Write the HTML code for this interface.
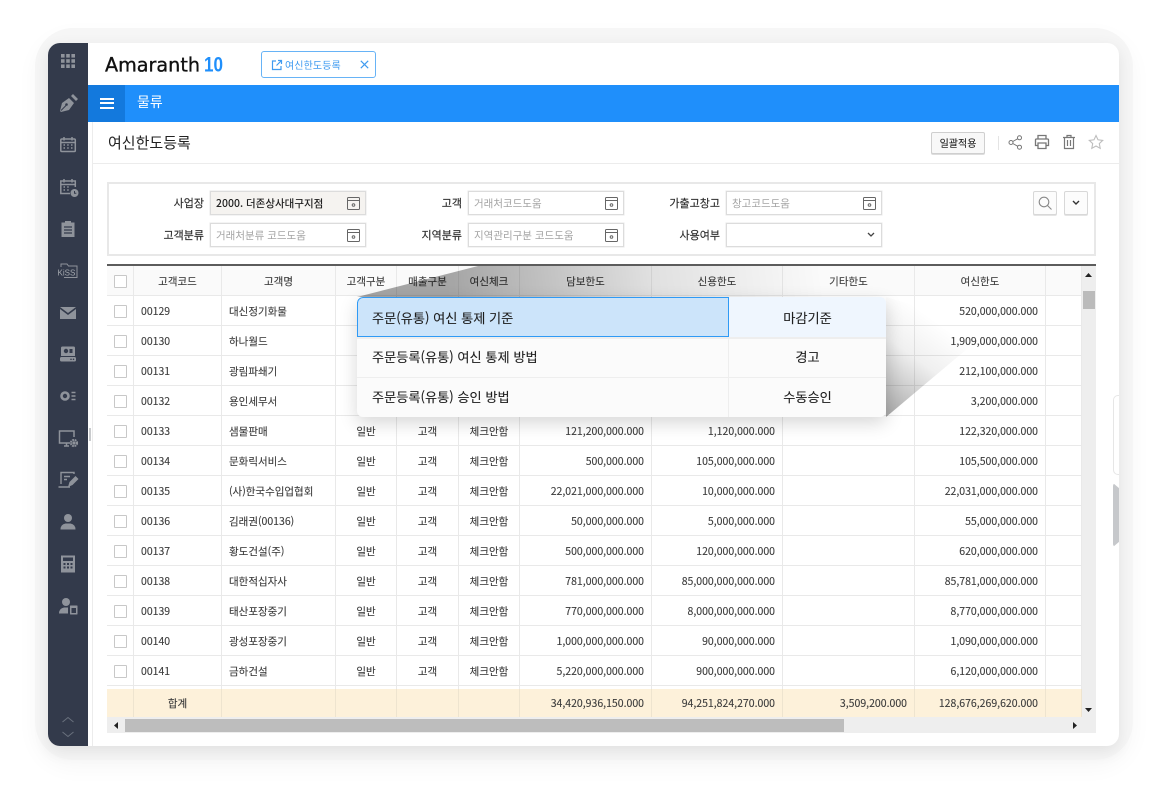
<!DOCTYPE html>
<html lang="ko"><head><meta charset="utf-8"><title>여신한도등록</title>
<style>
*{box-sizing:border-box}
html,body{margin:0;padding:0;background:#fff}
body{position:relative;width:1168px;height:801px;overflow:hidden;font-family:"Noto Sans CJK KR","Liberation Sans",sans-serif;font-size:10.5px;color:#444}
body>*{filter:blur(.3px)}
.a{position:absolute}
.frame{left:35px;top:28px;width:1098px;height:732px;border-radius:38px;background:#f6f6f6;box-shadow:0 8px 22px rgba(0,0,0,.035)}
.win{left:48px;top:43px;width:1071px;height:703px;border-radius:12px;background:#fff;box-shadow:0 5px 16px rgba(0,0,0,.09);overflow:hidden}
.side{left:48px;top:43px;width:40px;height:703px;background:#333a4b;border-radius:12px 0 0 12px}
.ic{position:absolute;left:56px;width:24px;height:24px}
.lbl{position:absolute;width:90px;text-align:right;font-size:11px;line-height:24px;color:#2e2e2e;-webkit-text-stroke:.15px #2e2e2e}
.inp{position:absolute;width:156px;height:24px;border:1px solid #dcdcdc;background:#fff;font-size:10.5px;line-height:22px;padding:1px 0 0 5px;color:#a4a4a4;box-shadow:0 0 0 .5px #e8e8e8}
.cal{position:absolute;right:5px;top:5px;width:13px;height:13px}
table{border-collapse:separate;border-spacing:0;table-layout:fixed;width:975px}
td,th{box-sizing:border-box;height:30px;padding:1px 0 0;border-right:1px solid #e9e9e9;border-bottom:1.5px solid #e9e9e9;text-align:center;font-size:10.5px;font-weight:400;color:#3c3c3c;white-space:nowrap;overflow:hidden;-webkit-text-stroke:.12px #3c3c3c}
th{background:#fafafa}
td.l{text-align:left;padding-left:7px}
td.r{text-align:right;padding-right:7px}
.t td{height:28px;border-bottom:0;border-color:#eee4cf;padding-top:0}
.cb{display:inline-block;width:13px;height:13px;border:1.5px solid #c8c8c8;background:#fff;vertical-align:middle;margin-top:-1px;border-radius:1px}
.pop{left:357px;top:297px;width:529px;height:120px;background:#fbfbfb;border-radius:6px;box-shadow:0 6px 18px rgba(0,0,0,.16);overflow:hidden}
.pc{position:absolute;font-size:13.2px;line-height:40px;height:40px;color:#1e1e1e;-webkit-text-stroke:.1px #1e1e1e}
</style></head><body>
<div class="a frame"></div>
<div class="a win"></div>
<div class="a side"></div>

<!-- sidebar icons -->
<svg class="ic" style="top:49px" viewBox="0 0 24 24" fill="#8f939b"><rect x="5" y="5" width="3.6" height="3.6"/><rect x="10.2" y="5" width="3.6" height="3.6"/><rect x="15.4" y="5" width="3.6" height="3.6"/><rect x="5" y="10.2" width="3.6" height="3.6"/><rect x="10.2" y="10.2" width="3.6" height="3.6"/><rect x="15.4" y="10.2" width="3.6" height="3.6"/><rect x="5" y="15.4" width="3.6" height="3.6"/><rect x="10.2" y="15.4" width="3.6" height="3.6"/><rect x="15.4" y="15.4" width="3.6" height="3.6"/></svg>
<svg class="ic" style="top:91px" viewBox="0 0 24 24" fill="#8f939b"><path d="M4 20l2-8 7-5 5 5-5 7-8 2zM15 5l2-2 5 5-2 2z"/><path d="M5 19.500l5-5" stroke="#333a4b" stroke-width="1"/><circle cx="10.500" cy="13.500" r="1.300" fill="#333a4b"/></svg>
<svg class="ic" style="top:133px" viewBox="0 0 24 24" fill="none" stroke="#8f939b" stroke-width="1.500"><rect x="4.800" y="6" width="14.500" height="12.500" rx="1"/><path d="M4.800 9.500h14.500M8 4v3.500M16 4v3.500"/><path d="M7.500 12h1.500M11.200 12h1.500M15 12h1.500M7.500 15h1.500M11.200 15h1.500M15 15h1.500"/></svg>
<svg class="ic" style="top:175px" viewBox="0 0 24 24" fill="none" stroke="#8f939b" stroke-width="1.500"><path d="M14 18.500H4.800V6h14.500v6M4.800 9.500h14.500M8 4v3.500M16 4v3.500"/><path d="M7.500 12h1.500M11.200 12h1.500M7.500 15h1.500M11.200 15h1.500"/><circle cx="18.500" cy="18" r="4" fill="#8f939b" stroke="none"/><path d="M18.500 16v2.200h1.800" stroke="#333a4b" stroke-width="1"/></svg>
<svg class="ic" style="top:217px" viewBox="0 0 24 24" fill="#8f939b"><path d="M5.500 5.500h13v14.500h-13z"/><rect x="9" y="4" width="6" height="3"/><path d="M8 10h8M8 13h8M8 16h8" stroke="#333a4b" stroke-width="1.200"/></svg>
<svg class="ic" style="top:259px" viewBox="0 0 24 24" fill="none" stroke="#8f939b" stroke-width="1"><path d="M5 8V5h6l1.500 2h8.500v11.500H8"/><text x="1.500" y="16.500" font-family="Liberation Sans,sans-serif" font-size="8" fill="#a4a8ae" stroke="none">KiSS</text></svg>
<svg class="ic" style="top:301px" viewBox="0 0 24 24" fill="#8f939b"><path d="M4 6h16L12 12z"/><path d="M4 8l8 6 8-6v10H4z"/></svg>
<svg class="ic" style="top:342px" viewBox="0 0 24 24" fill="#8f939b"><path d="M6.500 4.500h11q1.500 0 1.500 1.500v8H5V6q0-1.500 1.500-1.500z"/><rect x="4" y="15" width="16" height="4.500" rx="1.500"/><circle cx="10" cy="9" r="2.200" fill="#333a4b"/><rect x="13.500" y="7" width="3" height="4" fill="#333a4b"/><circle cx="15" cy="17.300" r=".8" fill="#333a4b"/><circle cx="17.500" cy="17.300" r=".8" fill="#333a4b"/></svg>
<svg class="ic" style="top:384px" viewBox="0 0 24 24" fill="none" stroke="#8f939b"><circle cx="9" cy="12" r="3.500" stroke-width="2.600"/><path d="M15.500 8.500h4M15.500 12h4M15.500 15.500h4" stroke-width="1.400"/></svg>
<svg class="ic" style="top:426px" viewBox="0 0 24 24" fill="none" stroke="#8f939b" stroke-width="1.500"><path d="M14 17H3.500V5h14.500v6M8 20h5M10.500 17v3"/><circle cx="18" cy="17" r="3" stroke-width="2.200" stroke-dasharray="1.700 .7"/><circle cx="18" cy="17" r="1.500" fill="#8f939b" stroke="none"/></svg>
<svg class="ic" style="top:468px" viewBox="0 0 24 24" fill="none" stroke="#8f939b" stroke-width="1.400"><path d="M18 6V4.500H5V16M2.500 19H14"/><path d="M8 8.500h6M8 11.500h3"/><path d="M12 19l1.500-5 6-6 3 3-6 6z" fill="#8f939b" stroke="none"/></svg>
<svg class="ic" style="top:510px" viewBox="0 0 24 24" fill="#8f939b"><circle cx="12" cy="8" r="4"/><path d="M4.500 19.500q0-5 5-6h5q5 1 5 6z"/></svg>
<svg class="ic" style="top:552px" viewBox="0 0 24 24" fill="#8f939b"><rect x="5" y="3.500" width="14" height="17"/><rect x="7" y="5.500" width="10" height="3.500" fill="#333a4b"/><path d="M7.500 11h2v2h-2zM11 11h2v2h-2zM14.500 11h2v2h-2zM7.500 14.500h2v2h-2zM11 14.500h2v2h-2zM14.500 14.500h2v2h-2z" fill="#333a4b"/></svg>
<svg class="ic" style="top:594px" viewBox="0 0 24 24" fill="#8f939b"><circle cx="10" cy="8" r="4"/><path d="M3 19.500q0-5 5-6h4v6z"/><rect x="14" y="11.500" width="7.500" height="9" rx=".5"/><rect x="15.500" y="14" width="4.500" height="5" fill="#333a4b"/></svg>
<svg class="a" style="left:60px;top:714px;width:16px;height:26px" viewBox="0 0 16 26" fill="none" stroke="#69707d" stroke-width="1"><path d="M2.500 8L8 3.500 13.500 8M2.500 18L8 22.500 13.500 18"/></svg>

<!-- logo and tab -->
<svg class="a" style="left:100px;top:48px;width:135px;height:32px"><text x="5" y="23.500" font-family="DejaVu Sans,Liberation Sans,sans-serif" font-size="19.500" fill="#111" stroke="#111" stroke-width=".35" textLength="95" lengthAdjust="spacingAndGlyphs">Amaranth</text><text x="104" y="23.500" font-family="Liberation Sans,sans-serif" font-weight="700" font-size="21" fill="#1f8ffb" textLength="19" lengthAdjust="spacingAndGlyphs">10</text></svg>
<div class="a" style="left:261px;top:51px;width:115px;height:27px;border:1.500px solid #67b3f6;border-radius:3px;background:#fff"></div>
<svg class="a" style="left:271px;top:59px;width:12px;height:12px" viewBox="0 0 12 12" fill="none" stroke="#3f9bf0" stroke-width="1.200"><path d="M5 2H1.500v8.500H10V7M7 1.500h3.500V5M10.500 1.500L5.500 6.500"/></svg>
<div class="a" style="left:285px;top:56px;font-size:10px;line-height:17px;letter-spacing:.1px;color:#3f9bf0">여신한도등록</div>
<svg class="a" style="left:360px;top:60px;width:9px;height:9px" viewBox="0 0 9 9" stroke="#3f9bf0" stroke-width="1.200"><path d="M.8.8l7.400 7.400M8.200.8L.8 8.200"/></svg>

<!-- blue bar -->
<div class="a" style="left:88px;top:85px;width:1031px;height:37px;background:#1f8ffb"></div>
<div class="a" style="left:88px;top:85px;width:37px;height:37px;background:#1379dd"></div>
<div class="a" style="left:100px;top:97.500px;width:14px;height:2px;background:#fff"></div>
<div class="a" style="left:100px;top:102px;width:14px;height:2px;background:#fff"></div>
<div class="a" style="left:100px;top:106.500px;width:14px;height:2px;background:#fff"></div>
<div class="a" style="left:137px;top:92px;font-size:14px;line-height:20px;color:#fff">물류</div>

<!-- title row -->
<div class="a" style="left:92px;top:122px;width:1px;height:624px;background:#ececec"></div>
<div class="a" style="left:92px;top:163px;width:1027px;height:1px;background:#ececec"></div>
<div class="a" style="left:108px;top:132px;font-size:15px;line-height:22px;color:#222">여신한도등록</div>
<div class="a" style="left:931px;top:132px;width:54px;height:22px;border:1px solid #cfcfcf;background:#f8f8f8;border-radius:2px;font-size:10px;line-height:20px;text-align:center;color:#222;box-shadow:0 1px 0 #ddd;-webkit-text-stroke:.1px #222">일괄적용</div>
<div class="a" style="left:998px;top:136px;width:1px;height:14px;background:#e4e4e4"></div>
<svg class="a" style="left:1008px;top:135px;width:15px;height:15px" viewBox="0 0 15 15" fill="none" stroke="#777" stroke-width="1"><circle cx="3" cy="7.500" r="2"/><circle cx="11.500" cy="2.800" r="2"/><circle cx="11.500" cy="12.200" r="2"/><path d="M4.800 6.500l5-2.800M4.800 8.500l5 2.800"/></svg>
<svg class="a" style="left:1034px;top:134px;width:16px;height:16px" viewBox="0 0 16 16" fill="none" stroke="#777" stroke-width="1.300"><path d="M4 5V1.500h8V5M3.500 11.500H1.500V6q0-1 1-1h11q1 0 1 1v5.500h-2"/><path d="M4 9h8v5.500H4z"/></svg>
<svg class="a" style="left:1062px;top:134px;width:14px;height:16px" viewBox="0 0 14 16" fill="none" stroke="#777" stroke-width="1.200"><path d="M1 3.500h12M5 3.500V1.500h4v2M2.500 3.500v11h9v-11M5.500 6v6M8.500 6v6"/></svg>
<svg class="a" style="left:1088px;top:134px;width:16px;height:16px" viewBox="0 0 16 16" fill="none" stroke="#bdbdbd" stroke-width="1.100"><path d="M8 1.500l2 4.300 4.700.6-3.400 3.200.9 4.700L8 12l-4.200 2.300.9-4.700L1.300 6.400 6 5.800z"/></svg>

<!-- search box -->
<div class="a" style="left:107px;top:182px;width:989px;height:74px;border:2px solid #e8e8e8;background:#fff"></div>
<div class="lbl" style="left:114px;top:191px">사업장</div>
<div class="lbl" style="left:114px;top:223px">고객분류</div>
<div class="lbl" style="left:372px;top:191px">고객</div>
<div class="lbl" style="left:372px;top:223px">지역분류</div>
<div class="lbl" style="left:630px;top:191px">가출고창고</div>
<div class="lbl" style="left:630px;top:223px">사용여부</div>
<div class="inp" style="left:210px;top:191px;background:#f5f3f0;color:#222;font-weight:500">2000. 더존상사대구지점<svg class="cal" viewBox="0 0 13 13" fill="none" stroke="#666" stroke-width="1"><rect x=".5" y=".5" width="12" height="12" rx="1"/><path d="M.5 3.500h12"/><circle cx="6.500" cy="8" r="1.300"/></svg></div>
<div class="inp" style="left:210px;top:223px">거래처분류 코드도움<svg class="cal" viewBox="0 0 13 13" fill="none" stroke="#666" stroke-width="1"><rect x=".5" y=".5" width="12" height="12" rx="1"/><path d="M.5 3.500h12"/><circle cx="6.500" cy="8" r="1.300"/></svg></div>
<div class="inp" style="left:468px;top:191px">거래처코드도움<svg class="cal" viewBox="0 0 13 13" fill="none" stroke="#666" stroke-width="1"><rect x=".5" y=".5" width="12" height="12" rx="1"/><path d="M.5 3.500h12"/><circle cx="6.500" cy="8" r="1.300"/></svg></div>
<div class="inp" style="left:468px;top:223px">지역관리구분 코드도움<svg class="cal" viewBox="0 0 13 13" fill="none" stroke="#666" stroke-width="1"><rect x=".5" y=".5" width="12" height="12" rx="1"/><path d="M.5 3.500h12"/><circle cx="6.500" cy="8" r="1.300"/></svg></div>
<div class="inp" style="left:726px;top:191px">창고코드도움<svg class="cal" viewBox="0 0 13 13" fill="none" stroke="#666" stroke-width="1"><rect x=".5" y=".5" width="12" height="12" rx="1"/><path d="M.5 3.500h12"/><circle cx="6.500" cy="8" r="1.300"/></svg></div>
<div class="inp" style="left:726px;top:223px"><svg class="a" style="right:6px;top:8px;width:8px;height:6px" viewBox="0 0 8 6" fill="none" stroke="#444" stroke-width="1.300"><path d="M1 1l3 3 3-3"/></svg></div>
<div class="a" style="left:1033px;top:191px;width:24px;height:24px;border:1px solid #d8d8d8;border-radius:2px;background:#fcfcfc;box-shadow:0 1px 0 #e4e4e4"></div>
<svg class="a" style="left:1038px;top:196px;width:14px;height:14px" viewBox="0 0 14 14" fill="none" stroke="#888" stroke-width="1.100"><circle cx="6" cy="6" r="4.800"/><path d="M9.500 9.500l4 4"/></svg>
<div class="a" style="left:1064px;top:191px;width:24px;height:24px;border:1px solid #d8d8d8;border-radius:2px;background:#fcfcfc;box-shadow:0 1px 0 #e4e4e4"></div>
<svg class="a" style="left:1072px;top:200px;width:8px;height:6px" viewBox="0 0 8 6" fill="none" stroke="#333" stroke-width="1.400"><path d="M1 1l3 3 3-3"/></svg>

<!-- grid -->
<div class="a" style="left:107px;top:264px;width:989px;height:2px;background:#5c5c5c"></div>
<div class="a" style="left:1082px;top:266px;width:14px;height:467px;background:#eeeeee"></div>
<div class="a" style="left:107px;top:266px;width:975px;height:423px;overflow:hidden;background:#fff">
<table><colgroup><col style="width:27px"><col style="width:88px"><col style="width:114px"><col style="width:61px"><col style="width:62px"><col style="width:61px"><col style="width:132px"><col style="width:131px"><col style="width:132px"><col style="width:131px"><col style="width:36px"></colgroup>
<tr><th><span class="cb"></span></th><th>고객코드</th><th>고객명</th><th>고객구분</th><th>매출구분</th><th>여신체크</th><th>담보한도</th><th>신용한도</th><th>기타한도</th><th>여신한도</th><th></th></tr>
<tr><td><span class="cb"></span></td><td class="l">00129</td><td class="l">대신정기화물</td><td>일반</td><td>고객</td><td>체크안함</td><td class="r"></td><td class="r"></td><td></td><td class="r">520,000,000.000</td><td></td></tr>
<tr><td><span class="cb"></span></td><td class="l">00130</td><td class="l">하나월드</td><td>일반</td><td>고객</td><td>체크안함</td><td class="r"></td><td class="r"></td><td></td><td class="r">1,909,000,000.000</td><td></td></tr>
<tr><td><span class="cb"></span></td><td class="l">00131</td><td class="l">광림파쇄기</td><td>일반</td><td>고객</td><td>체크안함</td><td class="r"></td><td class="r"></td><td></td><td class="r">212,100,000.000</td><td></td></tr>
<tr><td><span class="cb"></span></td><td class="l">00132</td><td class="l">용인세무서</td><td>일반</td><td>고객</td><td>체크안함</td><td class="r"></td><td class="r"></td><td></td><td class="r">3,200,000.000</td><td></td></tr>
<tr><td><span class="cb"></span></td><td class="l">00133</td><td class="l">샘물판매</td><td>일반</td><td>고객</td><td>체크안함</td><td class="r">121,200,000.000</td><td class="r">1,120,000.000</td><td></td><td class="r">122,320,000.000</td><td></td></tr>
<tr><td><span class="cb"></span></td><td class="l">00134</td><td class="l">문화릭서비스</td><td>일반</td><td>고객</td><td>체크안함</td><td class="r">500,000.000</td><td class="r">105,000,000.000</td><td></td><td class="r">105,500,000.000</td><td></td></tr>
<tr><td><span class="cb"></span></td><td class="l">00135</td><td class="l">(사)한국수입업협회</td><td>일반</td><td>고객</td><td>체크안함</td><td class="r">22,021,000,000.000</td><td class="r">10,000,000.000</td><td></td><td class="r">22,031,000,000.000</td><td></td></tr>
<tr><td><span class="cb"></span></td><td class="l">00136</td><td class="l">김래권(00136)</td><td>일반</td><td>고객</td><td>체크안함</td><td class="r">50,000,000.000</td><td class="r">5,000,000.000</td><td></td><td class="r">55,000,000.000</td><td></td></tr>
<tr><td><span class="cb"></span></td><td class="l">00137</td><td class="l">황도건설(주)</td><td>일반</td><td>고객</td><td>체크안함</td><td class="r">500,000,000.000</td><td class="r">120,000,000.000</td><td></td><td class="r">620,000,000.000</td><td></td></tr>
<tr><td><span class="cb"></span></td><td class="l">00138</td><td class="l">대한적십자사</td><td>일반</td><td>고객</td><td>체크안함</td><td class="r">781,000,000.000</td><td class="r">85,000,000,000.000</td><td></td><td class="r">85,781,000,000.000</td><td></td></tr>
<tr><td><span class="cb"></span></td><td class="l">00139</td><td class="l">태산포장중기</td><td>일반</td><td>고객</td><td>체크안함</td><td class="r">770,000,000.000</td><td class="r">8,000,000,000.000</td><td></td><td class="r">8,770,000,000.000</td><td></td></tr>
<tr><td><span class="cb"></span></td><td class="l">00140</td><td class="l">광성포장중기</td><td>일반</td><td>고객</td><td>체크안함</td><td class="r">1,000,000,000.000</td><td class="r">90,000,000.000</td><td></td><td class="r">1,090,000,000.000</td><td></td></tr>
<tr><td><span class="cb"></span></td><td class="l">00141</td><td class="l">금하건설</td><td>일반</td><td>고객</td><td>체크안함</td><td class="r">5,220,000,000.000</td><td class="r">900,000,000.000</td><td></td><td class="r">6,120,000,000.000</td><td></td></tr>
<tr><td></td><td></td><td></td><td></td><td></td><td></td><td></td><td></td><td></td><td></td><td></td></tr>
</table></div>
<div class="a" style="left:107px;top:689px;width:975px;height:28px;overflow:hidden">
<table class="t"><colgroup><col style="width:27px"><col style="width:88px"><col style="width:114px"><col style="width:61px"><col style="width:62px"><col style="width:61px"><col style="width:132px"><col style="width:131px"><col style="width:132px"><col style="width:131px"><col style="width:36px"></colgroup>
<tr style="background:#fdf1da"><td></td><td>합계</td><td></td><td></td><td></td><td></td><td class="r">34,420,936,150.000</td><td class="r">94,251,824,270.000</td><td class="r">3,509,200.000</td><td class="r">128,676,269,620.000</td><td></td></tr>
</table></div>

<!-- scrollbars -->
<div class="a" style="left:107px;top:717px;width:989px;height:16px;background:#eeeeee"></div>
<div class="a" style="left:125px;top:719px;width:719px;height:13px;background:#bdbdbd"></div>
<svg class="a" style="left:113px;top:722px;width:6px;height:8px"><path d="M5 0v7L1 3.500z" fill="#222"/></svg>
<svg class="a" style="left:1072px;top:722px;width:6px;height:8px"><path d="M1 0v7l4-3.500z" fill="#222"/></svg>
<div class="a" style="left:1083px;top:291px;width:12px;height:18px;background:#bbb"></div>
<svg class="a" style="left:1085px;top:272px;width:8px;height:6px"><path d="M0 5h7L3.500 1z" fill="#222"/></svg>
<svg class="a" style="left:1085px;top:707px;width:8px;height:6px"><path d="M0 1h7L3.500 5z" fill="#222"/></svg>

<!-- right handles -->
<div class="a" style="left:1113px;top:395px;width:6px;height:80px;border:1px solid #e6e6e6;border-right:0;border-radius:5px 0 0 5px;background:#fff"></div>
<div class="a" style="left:1113px;top:483px;width:6px;height:64px;background:#c6c8cb;clip-path:polygon(0 0,100% 8%,100% 92%,0 100%);border-radius:3px 0 0 3px"></div>

<!-- fold shadows -->
<svg class="a" style="left:0;top:0;width:1168px;height:801px;pointer-events:none">
<defs>
<linearGradient id="g1" gradientUnits="userSpaceOnUse" x1="450" y1="305" x2="820" y2="258"><stop offset="0" stop-color="#000" stop-opacity=".34"/><stop offset=".55" stop-color="#000" stop-opacity=".1"/><stop offset="1" stop-color="#000" stop-opacity="0"/></linearGradient>
<linearGradient id="g2" gradientUnits="userSpaceOnUse" x1="884" y1="412" x2="945" y2="328"><stop offset="0" stop-color="#000" stop-opacity=".34"/><stop offset=".6" stop-color="#000" stop-opacity=".06"/><stop offset="1" stop-color="#000" stop-opacity="0"/></linearGradient>
</defs>
<polygon points="357,297 478,266 900,266 900,297" fill="url(#g1)"/>
<polygon points="886,297 992,328 886,417" fill="url(#g2)"/>
</svg>

<!-- popup -->
<div class="a pop">
<div class="a" style="left:0;top:0;width:372px;height:40px;background:#cce4fa;border:1px solid #2f9af5;border-radius:6px 0 0 0"></div>
<div class="a" style="left:372px;top:0;width:157px;height:40px;background:#eff6fe"></div>
<div class="a" style="left:0;top:40px;width:529px;height:1.500px;background:#eeeeee"></div>
<div class="a" style="left:0;top:79.500px;width:529px;height:1.500px;background:#eeeeee"></div>
<div class="a" style="left:371px;top:40px;width:1px;height:80px;background:#eeeeee"></div>
<div class="pc" style="left:15px;top:1px">주문(유통) 여신 통제 기준</div>
<div class="pc" style="left:15px;top:40px">주문등록(유통) 여신 통제 방법</div>
<div class="pc" style="left:15px;top:80px">주문등록(유통) 승인 방법</div>
<div class="pc" style="left:372px;top:1px;width:157px;text-align:center">마감기준</div>
<div class="pc" style="left:372px;top:40px;width:157px;text-align:center">경고</div>
<div class="pc" style="left:372px;top:80px;width:157px;text-align:center">수동승인</div>
</div>
<div class="a" style="left:89px;top:428px;width:2px;height:13px;background:#c9cbcd"></div>
</body></html>
